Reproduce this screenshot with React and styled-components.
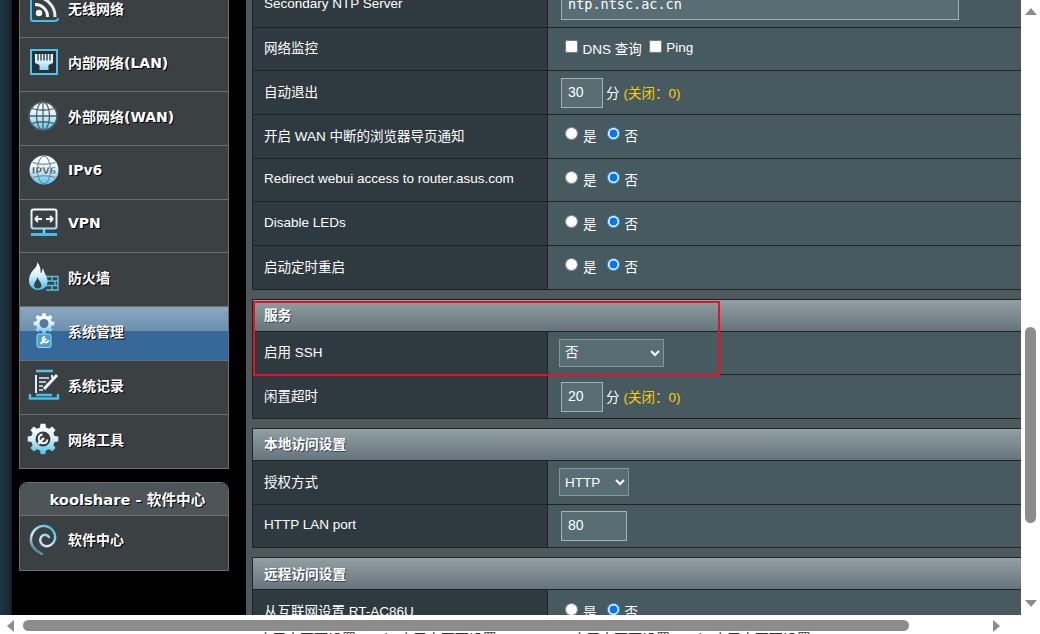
import styled, { createGlobalStyle } from 'styled-components'

const Global = createGlobalStyle`
  html, body {
    margin: 0;
    padding: 0;
    overflow: hidden;
    background: #fff;
  }
`

const Window = styled.div`
  width: 1040px;
  height: 634px;
  display: flex;
  flex-direction: column;
  overflow: hidden;
  background: #fff;
`
const TopArea = styled.div`
  height: 615px;
  flex: none;
  display: flex;
`
const Page = styled.div`
  flex: 1;
  min-width: 0;
  display: flex;
  overflow: hidden;
  background: #000;
`
const EdgeStrip = styled.div`
  width: 12px;
  flex: none;
  background: linear-gradient(90deg, #1f3543, #1a2a34 80%, #10181d);
`

// Sidebar
const Sidebar = styled.div`
  width: 210px;
  flex: none;
  margin: -15.5px 0 0 7px;
`
const Menu = styled.div`
  border: 1px solid #6a6e70;
  border-top: 0;
  display: flex;
  flex-direction: column;
`
const MenuItem = styled.div`
  height: 53.75px;
  flex: none;
  box-sizing: border-box;
  display: flex;
  align-items: center;
  gap: 8px;
  padding: 0 0 ${p => p.$soft ? 7 : 5}px 8px;
  border-bottom: 1px solid #6a6e70;
  background: ${p => p.$active
    ? 'linear-gradient(#8ba7c0 0, #6c8fae 46%, #37689a 46%, #37689a 100%)'
    : '#3b4043'};
  &:last-child {
    border-bottom: 0;
  }
`
const MenuText = styled.span`
  font: bold 14px "DejaVu Sans", "Noto Sans CJK SC", sans-serif;
  color: #fff;
  text-shadow: 1px 1px 0 #000;
  white-space: nowrap;
`
const SoftCenter = styled.div`
  margin-top: 12.5px;
  border: 1px solid #6a6e70;
  border-radius: 8px 8px 0 0;
  overflow: hidden;
`
const SoftTitle = styled.div`
  height: 33px;
  box-sizing: border-box;
  display: flex;
  align-items: center;
  justify-content: center;
  padding-left: 7px;
  border-bottom: 1px solid #6a6e70;
  background: #4d5559;
  font: bold 14.7px "DejaVu Sans", "Noto Sans CJK SC", sans-serif;
  color: #fff;
  text-shadow: 1px 1px 0 #000;
`

// Settings panel
const Panel = styled.div`
  flex: 1;
  min-width: 0;
  margin-left: 17px;
  padding: 0 0 0 6px;
  background: #4d595d;
  overflow: hidden;
`
const Tables = styled.div`
  margin-top: -16px;
  display: flex;
  flex-direction: column;
  gap: 9px;
`
const Section = styled.div`
  position: relative;
  border-left: 1px solid #222;
  border-top: ${p => p.$open ? '0' : '1px solid #222'};
`
const SectionHead = styled.div`
  height: 32px;
  box-sizing: border-box;
  display: flex;
  align-items: center;
  padding: 0 0 2px 11px;
  border-bottom: 1px solid #222;
  background: linear-gradient(#92a0a5, #66757c);
  font: bold 13.7px "Liberation Sans", "Noto Sans CJK SC", sans-serif;
  color: #fff;
  text-shadow: 1px 1px 0 #3c484d;
`
const Row = styled.div`
  height: 43.67px;
  box-sizing: border-box;
  display: flex;
  border-bottom: 1px solid #222;
`
const Label = styled.div`
  width: 295px;
  flex: none;
  box-sizing: border-box;
  display: flex;
  align-items: center;
  padding: 0 0 3px 11px;
  background: #2f3a40;
  border-right: 1px solid #222;
  font: 13.5px "Liberation Sans", "Noto Sans CJK SC", sans-serif;
  color: #fff;
  white-space: nowrap;
`
const Value = styled.div`
  flex: 1;
  display: flex;
  align-items: center;
  padding-left: 11px;
  background: #475a5f;
  font: 13.5px "Liberation Sans", "Noto Sans CJK SC", sans-serif;
  color: #fff;
  white-space: nowrap;
`
const TextInput = styled.input`
  box-sizing: border-box;
  width: ${p => p.$w}px;
  height: 30px;
  margin: 0 3px 0 2px;
  padding: 0 0 2px 6px;
  border: 1px solid #a9b1b4;
  border-radius: 0;
  outline: 0;
  background: #596d74;
  color: #fff;
  font: ${p => p.$mono ? '13.5px "DejaVu Sans Mono", monospace' : '14px "Liberation Sans", sans-serif'};
`
const Select = styled.select`
  box-sizing: border-box;
  width: ${p => p.$w}px;
  height: 28px;
  margin: 0;
  padding: 0 0 0 1px;
  border: 1px solid #8a9599;
  border-radius: 0;
  background-color: #596d74;
  color: #fff;
  font: 13.5px "Liberation Sans", "Noto Sans CJK SC", sans-serif;
`
const Unit = styled.span`
  padding-bottom: 2px;
`
const Hint = styled.span`
  margin-left: 4px;
  color: #fc0;
`
const Choice = styled.label`
  display: inline-flex;
  align-items: center;
  margin: 0 ${p => p.$tight ? 1 : 4}px 2px 0;
`
const Tick = styled.input`
  width: 13px;
  height: 13px;
  margin: 0 ${p => p.type === 'radio' ? 5 : 4.5}px 3px 6px;
`
const RedFrame = styled.div`
  position: absolute;
  top: 1px;
  left: 0;
  width: 467px;
  height: 75px;
  box-sizing: border-box;
  border: 2px solid #e8131f;
  pointer-events: none;
`

// Scrollbars
const VBar = styled.div`
  width: 19px;
  flex: none;
  display: flex;
  flex-direction: column;
  align-items: center;
  padding-top: 8px;
  box-sizing: border-box;
  background: #fff;
`
const VThumb = styled.div`
  width: 11px;
  height: 196px;
  margin-top: 312px;
  border-radius: 6px;
  background: #8c8c8c;
`
const HBar = styled.div`
  height: 17px;
  flex: none;
  display: flex;
  align-items: center;
  padding: 4px 0 0 7px;
  box-sizing: border-box;
  background: #fff;
`
const HThumb = styled.div`
  width: 886px;
  height: 11px;
  margin-left: 9px;
  border-radius: 6px;
  background: #8c8c8c;
`
const Arrow = styled.div`
  width: 0;
  height: 0;
  flex: none;
  border-style: solid;
  border-color: transparent;
  ${p => p.$dir === 'up' && 'border-width: 0 6.5px 7px; border-bottom-color: #8c8c8c;'}
  ${p => p.$dir === 'down' && 'border-width: 7px 6.5px 0; border-top-color: #8c8c8c; margin-top: 77px;'}
  ${p => p.$dir === 'left' && 'border-width: 6.5px 7px 6.5px 0; border-right-color: #8c8c8c;'}
  ${p => p.$dir === 'right' && 'border-width: 6.5px 0 6.5px 7px; border-left-color: #8c8c8c; margin-left: 84px;'}
`
const Underneath = styled.div`
  height: 2px;
  overflow: hidden;
  padding-left: 258px;
  font: 14px/14px "Liberation Sans", "Noto Sans CJK SC", sans-serif;
  color: #333;
  white-space: nowrap;
`

// Icons
const Svg = styled.svg`
  width: 32px;
  height: ${p => p.$h || 32}px;
  flex: none;
  overflow: visible;
`
const Fade = ({ id, h = 32 }) => (
  <defs>
    <linearGradient id={id} gradientUnits="userSpaceOnUse" x1="0" y1="2" x2="0" y2={h}>
      <stop offset="0" stopColor="#ffffff" />
      <stop offset="0.45" stopColor="#d8f1fb" />
      <stop offset="1" stopColor="#3fbdec" />
    </linearGradient>
  </defs>
)

// outline of a cog with n teeth
const gear = (cx, cy, r1, r2, n) => {
  let d = ''
  const step = (Math.PI * 2) / n
  for (let i = 0; i < n; i++) {
    const a = i * step - Math.PI / 2
    const pts = [[r2, a - step * 0.2], [r2, a + step * 0.2], [r1, a + step * 0.32], [r1, a + step * 0.68]]
    pts.forEach(([r, t], j) => {
      d += `${i === 0 && j === 0 ? 'M' : 'L'}${(cx + r * Math.cos(t)).toFixed(2)} ${(cy + r * Math.sin(t)).toFixed(2)} `
    })
  }
  return d + 'Z'
}

const WifiIcon = () => (
  <Svg viewBox="0 0 32 32">
    <path d="M3 3V27Q3 29 5 29H27Q30 29 30 26" fill="none" stroke="#44bfec" strokeWidth="2" />
    <circle cx="11" cy="21" r="3.2" fill="#eef9fd" />
    <path d="M7 12.5A12 12 0 0 1 19.5 25" fill="none" stroke="#f2f8fa" strokeWidth="3" />
    <path d="M7 5A19.5 19.5 0 0 1 27 25" fill="none" stroke="#dfeef3" strokeWidth="3" />
  </Svg>
)
const LanIcon = () => (
  <Svg viewBox="0 0 32 32">
    <Fade id="lan" />
    <rect x="2" y="3" width="28" height="26" fill="#4cc4ef" />
    <rect x="4" y="5" width="24" height="22" fill="#2a3136" />
    <path d="M7 8H25V17L20.5 19V24H11.5V19L7 17Z" fill="url(#lan)" />
    <path d="M10 8V14.5M13 8V14.5M16 8V14.5M19 8V14.5M22 8V14.5" stroke="#2a3136" strokeWidth="1.3" />
  </Svg>
)
const GlobeIcon = () => (
  <Svg viewBox="0 0 32 32">
    <Fade id="wan" />
    <circle cx="15" cy="16" r="14" fill="url(#wan)" />
    <g fill="none" stroke="#4e5e69" strokeWidth="1.3">
      <circle cx="15" cy="16" r="14" strokeWidth="1.6" />
      <ellipse cx="15" cy="16" rx="6.5" ry="14" />
      <path d="M15 2V30M1 16H29M3.5 8.5Q15 12 26.5 8.5M3.5 23.5Q15 20 26.5 23.5" />
    </g>
  </Svg>
)
const Ipv6Icon = () => (
  <Svg viewBox="0 0 32 32">
    <Fade id="v6" />
    <circle cx="16" cy="16" r="14.5" fill="url(#v6)" />
    <g fill="none" stroke="#6d7d87" strokeWidth="1">
      <ellipse cx="16" cy="16" rx="6.5" ry="14" />
      <path d="M4.5 8.5Q16 12 27.5 8.5M4.5 23.5Q16 20 27.5 23.5" />
    </g>
    <text x="16" y="20" textAnchor="middle" fontFamily="DejaVu Sans" fontWeight="bold" fontSize="9.5" fill="#3c4a52" stroke="#fff" strokeWidth="0.3">IPV6</text>
  </Svg>
)
const VpnIcon = () => (
  <Svg viewBox="0 0 32 32">
    <Fade id="vpn" />
    <rect x="3.5" y="2.5" width="25" height="19" rx="2" fill="none" stroke="url(#vpn)" strokeWidth="2" />
    <path d="M7 12H14M7 12L10 9M7 12L10 15M25 12H18M25 12L22 9M25 12L22 15" fill="none" stroke="#e8f6fb" strokeWidth="1.8" />
    <path d="M16 22V27" stroke="#7dd0ef" strokeWidth="2.5" />
    <path d="M3 27.5H29" stroke="#45bfee" strokeWidth="3" />
  </Svg>
)
const FireIcon = () => (
  <Svg viewBox="0 0 32 32">
    <Fade id="fire" h={29} />
    <path d="M18 15.5H30V29H18M18 20H30M18 24.5H30M24 15.5V20M27 20V24.5M24 24.5V29" fill="none" stroke="#58c0e6" strokeWidth="1.4" />
    <path d="M9 1C10 6 5 8 2.5 13C-1 20 1.5 28 9 29C16 29.5 20 25 19.5 19C19 15 16 12 15 7C14 10 13.5 12 12.5 12C13 8 12 4 9 1Z" fill="url(#fire)" />
    <path d="M9.5 16C10 19 13.5 21.5 13.5 24.5C13.5 28.5 6 28.5 6 24.5C6 21.5 9 19 9.5 16Z" fill="#3b4348" />
  </Svg>
)
const AdminIcon = () => (
  <Svg viewBox="0 0 32 36" $h={36}>
    <Fade id="adm" h={22} />
    <path d={gear(16, 10.5, 8, 10.5, 8)} fill="url(#adm)" />
    <circle cx="16" cy="10.5" r="4.5" fill="#56799c" />
    <rect x="9" y="21" width="14" height="13.5" rx="2" fill="#4d9fce" stroke="#9adcf5" strokeWidth="1" />
    <path d="M12.5 31L18 25.5" stroke="#fff" strokeWidth="2.2" />
    <path d="M17 23.5A3 3 0 1 0 20.5 27" fill="none" stroke="#fff" strokeWidth="1.6" />
  </Svg>
)
const LogIcon = () => (
  <Svg viewBox="0 0 32 32">
    <path d="M8 2H25" stroke="#4cc4ef" strokeWidth="2.5" />
    <path d="M8 6V24M24 6V9" fill="none" stroke="#dfeff5" strokeWidth="2" />
    <path d="M11 9H21M11 13H18M11 17H15M11 21H15" stroke="#dfeff5" strokeWidth="1.6" />
    <path d="M16 20L29 6" stroke="#f2f8fa" strokeWidth="3" />
    <path d="M2 25V29.5H30V25M8 26H24" fill="none" stroke="#45bfee" strokeWidth="2.4" />
  </Svg>
)
const ToolIcon = () => (
  <Svg viewBox="0 0 32 32">
    <Fade id="tool" />
    <path d={gear(15, 16, 12, 15.5, 8)} fill="url(#tool)" />
    <circle cx="15" cy="16" r="7.5" fill="#363c40" />
    <path d="M10 21L16 15" stroke="#fff" strokeWidth="2.4" />
    <path d="M14.5 11.5A4.4 4.4 0 1 0 19.5 16.5" fill="none" stroke="#fff" strokeWidth="1.8" />
  </Svg>
)
const SwirlIcon = () => (
  <Svg viewBox="0 0 32 32">
    <defs>
      <linearGradient id="swirl" gradientUnits="userSpaceOnUse" x1="24" y1="4" x2="6" y2="28">
        <stop offset="0" stopColor="#45bde6" />
        <stop offset="0.6" stopColor="#d8edf3" />
        <stop offset="1" stopColor="#3f7f9a" />
      </linearGradient>
    </defs>
    <path d="M14 31C6 27 2 21 3 15C4 8 10 2 17 3C24 4 28 10 27 16C26 21 21 24 17 23C13 22 11 18 13 14C15 11 19 11 21 14" fill="none" stroke="url(#swirl)" strokeWidth="2.4" strokeLinecap="round" />
  </Svg>
)

const menu = [
  { icon: <WifiIcon />, text: '无线网络' },
  { icon: <LanIcon />, text: '内部网络(LAN)' },
  { icon: <GlobeIcon />, text: '外部网络(WAN)' },
  { icon: <Ipv6Icon />, text: 'IPv6' },
  { icon: <VpnIcon />, text: 'VPN' },
  { icon: <FireIcon />, text: '防火墙' },
  { icon: <AdminIcon />, text: '系统管理', active: true },
  { icon: <LogIcon />, text: '系统记录' },
  { icon: <ToolIcon />, text: '网络工具' },
]

const YesNo = ({ name }) => (
  <>
    <Choice><Tick type="radio" name={name} />是</Choice>
    <Choice><Tick type="radio" name={name} defaultChecked />否</Choice>
  </>
)
const Minutes = ({ value }) => (
  <>
    <TextInput $w={42} defaultValue={value} />
    <Unit>分<Hint>(关闭：0)</Hint></Unit>
  </>
)

export default function App() {
  return (
    <Window>
      <Global />
      <TopArea>
        <Page>
          <EdgeStrip />
          <Sidebar>
            <Menu>
              {menu.map(m => (
                <MenuItem key={m.text} $active={m.active}>
                  {m.icon}
                  <MenuText>{m.text}</MenuText>
                </MenuItem>
              ))}
            </Menu>
            <SoftCenter>
              <SoftTitle>koolshare - 软件中心</SoftTitle>
              <MenuItem $soft>
                <SwirlIcon />
                <MenuText>软件中心</MenuText>
              </MenuItem>
            </SoftCenter>
          </Sidebar>
          <Panel>
            <Tables>
              <Section $open>
                <Row>
                  <Label>Secondary NTP Server</Label>
                  <Value><TextInput $w={398} $mono defaultValue="ntp.ntsc.ac.cn" /></Value>
                </Row>
                <Row>
                  <Label>网络监控</Label>
                  <Value>
                    <Choice $tight><Tick type="checkbox" />DNS 查询</Choice>
                    <Choice $tight><Tick type="checkbox" />Ping</Choice>
                  </Value>
                </Row>
                <Row>
                  <Label>自动退出</Label>
                  <Value><Minutes value="30" /></Value>
                </Row>
                <Row>
                  <Label>开启 WAN 中断的浏览器导页通知</Label>
                  <Value><YesNo name="wan" /></Value>
                </Row>
                <Row>
                  <Label>Redirect webui access to router.asus.com</Label>
                  <Value><YesNo name="redirect" /></Value>
                </Row>
                <Row>
                  <Label>Disable LEDs</Label>
                  <Value><YesNo name="led" /></Value>
                </Row>
                <Row>
                  <Label>启动定时重启</Label>
                  <Value><YesNo name="reboot" /></Value>
                </Row>
              </Section>
              <Section>
                <SectionHead>服务</SectionHead>
                <Row>
                  <Label>启用 SSH</Label>
                  <Value>
                    <Select $w={105} defaultValue="no">
                      <option value="no">否</option>
                      <option value="lan">LAN only</option>
                    </Select>
                  </Value>
                </Row>
                <Row>
                  <Label>闲置超时</Label>
                  <Value><Minutes value="20" /></Value>
                </Row>
                <RedFrame />
              </Section>
              <Section>
                <SectionHead>本地访问设置</SectionHead>
                <Row>
                  <Label>授权方式</Label>
                  <Value>
                    <Select $w={70} defaultValue="http">
                      <option value="http">HTTP</option>
                      <option value="https">HTTPS</option>
                    </Select>
                  </Value>
                </Row>
                <Row>
                  <Label>HTTP LAN port</Label>
                  <Value><TextInput $w={66} defaultValue="80" /></Value>
                </Row>
              </Section>
              <Section>
                <SectionHead>远程访问设置</SectionHead>
                <Row>
                  <Label>从互联网设置 RT-AC86U</Label>
                  <Value><YesNo name="remote" /></Value>
                </Row>
              </Section>
            </Tables>
          </Panel>
        </Page>
        <VBar>
          <Arrow $dir="up" />
          <VThumb />
          <Arrow $dir="down" />
        </VBar>
      </TopArea>
      <HBar>
        <Arrow $dir="left" />
        <HThumb />
        <Arrow $dir="right" />
      </HBar>
      <Underneath>应用本页面设置 Apply 应用本页面设置 RT-AC86U 应用本页面设置 Apply 应用本页面设置</Underneath>
    </Window>
  )
}
